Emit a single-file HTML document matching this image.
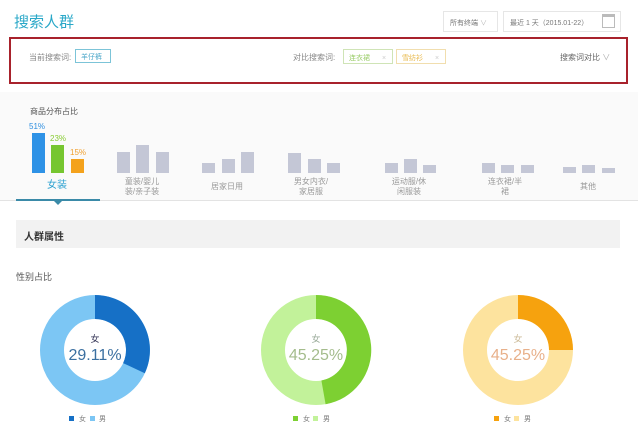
<!DOCTYPE html>
<html><head><meta charset="utf-8"><style>
*{margin:0;padding:0;box-sizing:border-box}
body{width:638px;height:444px;background:#fff;font-family:"Liberation Sans","Noto Sans CJK SC",sans-serif;position:relative;overflow:hidden;color:#666}
.a{position:absolute;white-space:nowrap}
.s{font-size:8px;color:#888}
.bar{position:absolute;bottom:271px;width:13px;background:#c4c7d6}
.lbl{position:absolute;font-size:8px;color:#999;text-align:center;line-height:10px;width:60px}
</style></head><body>
<div class="a" style="left:14px;top:11px;font-size:15px;color:#2aa8c8">搜索人群</div>
<div class="a" style="left:443px;top:11px;width:55px;height:21px;border:1px solid #e6e6e6;font-size:7px;color:#777;padding:6px 0 0 6px">所有终端 <span style="color:#bbb">∨</span></div>
<div class="a" style="left:503px;top:11px;width:118px;height:21px;border:1px solid #e6e6e6;font-size:7px;color:#777;padding:6px 0 0 6px">最近 1 天（2015.01-22）</div>
<div class="a" style="left:602px;top:14px;width:13px;height:14px;border:1px solid #bbb;border-top:3px solid #bbb"></div>
<div class="a" style="left:9px;top:37px;width:619px;height:47px;border:2px solid #a8222c"></div>
<div class="a s" style="left:29px;top:52px">当前搜索词:</div>
<div class="a" style="left:75px;top:49px;width:36px;height:14px;border:1px solid #7cc4d8;font-size:7px;color:#4aa6c8;padding:2px 0 0 5px">羊仔裤</div>
<div class="a s" style="left:293px;top:52px">对比搜索词:</div>
<div class="a" style="left:343px;top:49px;width:50px;height:15px;border:1px solid #cfe4b6;font-size:7px;color:#9c6;padding:3px 0 0 5px">连衣裙 <span style="color:#ccc;margin-left:10px">×</span></div>
<div class="a" style="left:396px;top:49px;width:50px;height:15px;border:1px solid #f1deae;font-size:7px;color:#e8b84a;padding:3px 0 0 5px">雪纺衫 <span style="color:#ccc;margin-left:10px">×</span></div>
<div class="a" style="left:560px;top:52px;font-size:8px;color:#666">搜索词对比 <span style="color:#aaa">∨</span></div>
<div class="a" style="left:0;top:92px;width:638px;height:108px;background:#fafafa"></div>
<div class="a" style="left:0;top:200px;width:638px;height:1px;background:#e3e3e3"></div>
<div class="a s" style="left:30px;top:106px;color:#555">商品分布占比</div>
<div class="a" style="left:29px;top:122px;font-size:8px;color:#2f8fe0">51%</div>
<div class="a" style="left:50px;top:134px;font-size:8px;color:#8c3">23%</div>
<div class="a" style="left:70px;top:148px;font-size:8px;color:#f0a030">15%</div>
<div class="bar" style="left:32px;height:40px;background:#2e92e6"></div>
<div class="bar" style="left:51px;height:28px;background:#76c630"></div>
<div class="bar" style="left:71px;height:14px;background:#f4a21c"></div>
<div class="bar" style="left:117px;height:21px"></div><div class="bar" style="left:136px;height:28px"></div><div class="bar" style="left:156px;height:21px"></div>
<div class="bar" style="left:202px;height:10px"></div><div class="bar" style="left:222px;height:14px"></div><div class="bar" style="left:241px;height:21px"></div>
<div class="bar" style="left:288px;height:20px"></div><div class="bar" style="left:308px;height:14px"></div><div class="bar" style="left:327px;height:10px"></div>
<div class="bar" style="left:385px;height:10px"></div><div class="bar" style="left:404px;height:14px"></div><div class="bar" style="left:423px;height:8px"></div>
<div class="bar" style="left:482px;height:10px"></div><div class="bar" style="left:501px;height:8px"></div><div class="bar" style="left:521px;height:8px"></div>
<div class="bar" style="left:563px;height:6px"></div><div class="bar" style="left:582px;height:8px"></div><div class="bar" style="left:602px;height:5px"></div>
<div class="lbl" style="left:27px;top:181px;font-size:10px;color:#2aa0d0">女装</div>
<div class="lbl" style="left:112px;top:177px">童装/婴儿<br>装/亲子装</div>
<div class="lbl" style="left:197px;top:182px">居家日用</div>
<div class="lbl" style="left:281px;top:177px">男女内衣/<br>家居服</div>
<div class="lbl" style="left:379px;top:177px">运动服/休<br>闲服装</div>
<div class="lbl" style="left:475px;top:177px">连衣裙/半<br>裙</div>
<div class="lbl" style="left:558px;top:182px">其他</div>
<div class="a" style="left:16px;top:199px;width:84px;height:2px;background:#3a8aa8"></div>
<div class="a" style="left:54px;top:201px;width:0;height:0;border-left:4px solid transparent;border-right:4px solid transparent;border-top:4px solid #3a8aa8"></div>
<div class="a" style="left:16px;top:220px;width:604px;height:28px;background:#f2f2f2"></div>
<div class="a" style="left:24px;top:228px;font-size:10px;color:#333;font-weight:bold">人群属性</div>
<div class="a" style="left:16px;top:270px;font-size:9px;color:#555">性别占比</div>
<svg class="a" style="left:0;top:280px" width="638" height="150">
<g transform="translate(95,70)">
<circle r="43" fill="none" stroke="#7cc6f4" stroke-width="24"/>
<path d="M0,-55 A55,55 0 0 1 49.8,23.2 L28.1,13.1 A31,31 0 0 0 0,-31Z" fill="#1670c6"/>
<text y="-8" text-anchor="middle" font-size="9" fill="#335">女</text>
<text y="10" text-anchor="middle" font-size="16" fill="#3a6fa0" font-family="Liberation Sans">29.11%</text>
</g>
<g transform="translate(316,70)">
<circle r="43" fill="none" stroke="#c2f29a" stroke-width="24"/>
<path d="M0,-55 A55,55 0 0 1 9.6,54.2 L5.4,30.5 A31,31 0 0 0 0,-31Z" fill="#7dd032"/>
<text y="-8" text-anchor="middle" font-size="9" fill="#9a9">女</text>
<text y="10" text-anchor="middle" font-size="16" fill="#a4bc8c" font-family="Liberation Sans">45.25%</text>
</g>
<g transform="translate(518,70)">
<circle r="43" fill="none" stroke="#fde39e" stroke-width="24"/>
<path d="M0,-55 A55,55 0 0 1 55,0 L31,0 A31,31 0 0 0 0,-31Z" fill="#f6a20e"/>
<text y="-8" text-anchor="middle" font-size="9" fill="#cb9">女</text>
<text y="10" text-anchor="middle" font-size="16" fill="#e8b08a" font-family="Liberation Sans">45.25%</text>
</g>
<g font-size="7" fill="#777">
<rect x="69" y="136" width="5" height="5" fill="#1670c6"/><text x="79" y="141">女</text>
<rect x="90" y="136" width="5" height="5" fill="#7cc6f4"/><text x="99" y="141">男</text>
<rect x="293" y="136" width="5" height="5" fill="#7dd032"/><text x="303" y="141">女</text>
<rect x="313" y="136" width="5" height="5" fill="#c2f29a"/><text x="323" y="141">男</text>
<rect x="494" y="136" width="5" height="5" fill="#f6a20e"/><text x="504" y="141">女</text>
<rect x="514" y="136" width="5" height="5" fill="#fde39e"/><text x="524" y="141">男</text>
</g>
</svg>
</body></html>
